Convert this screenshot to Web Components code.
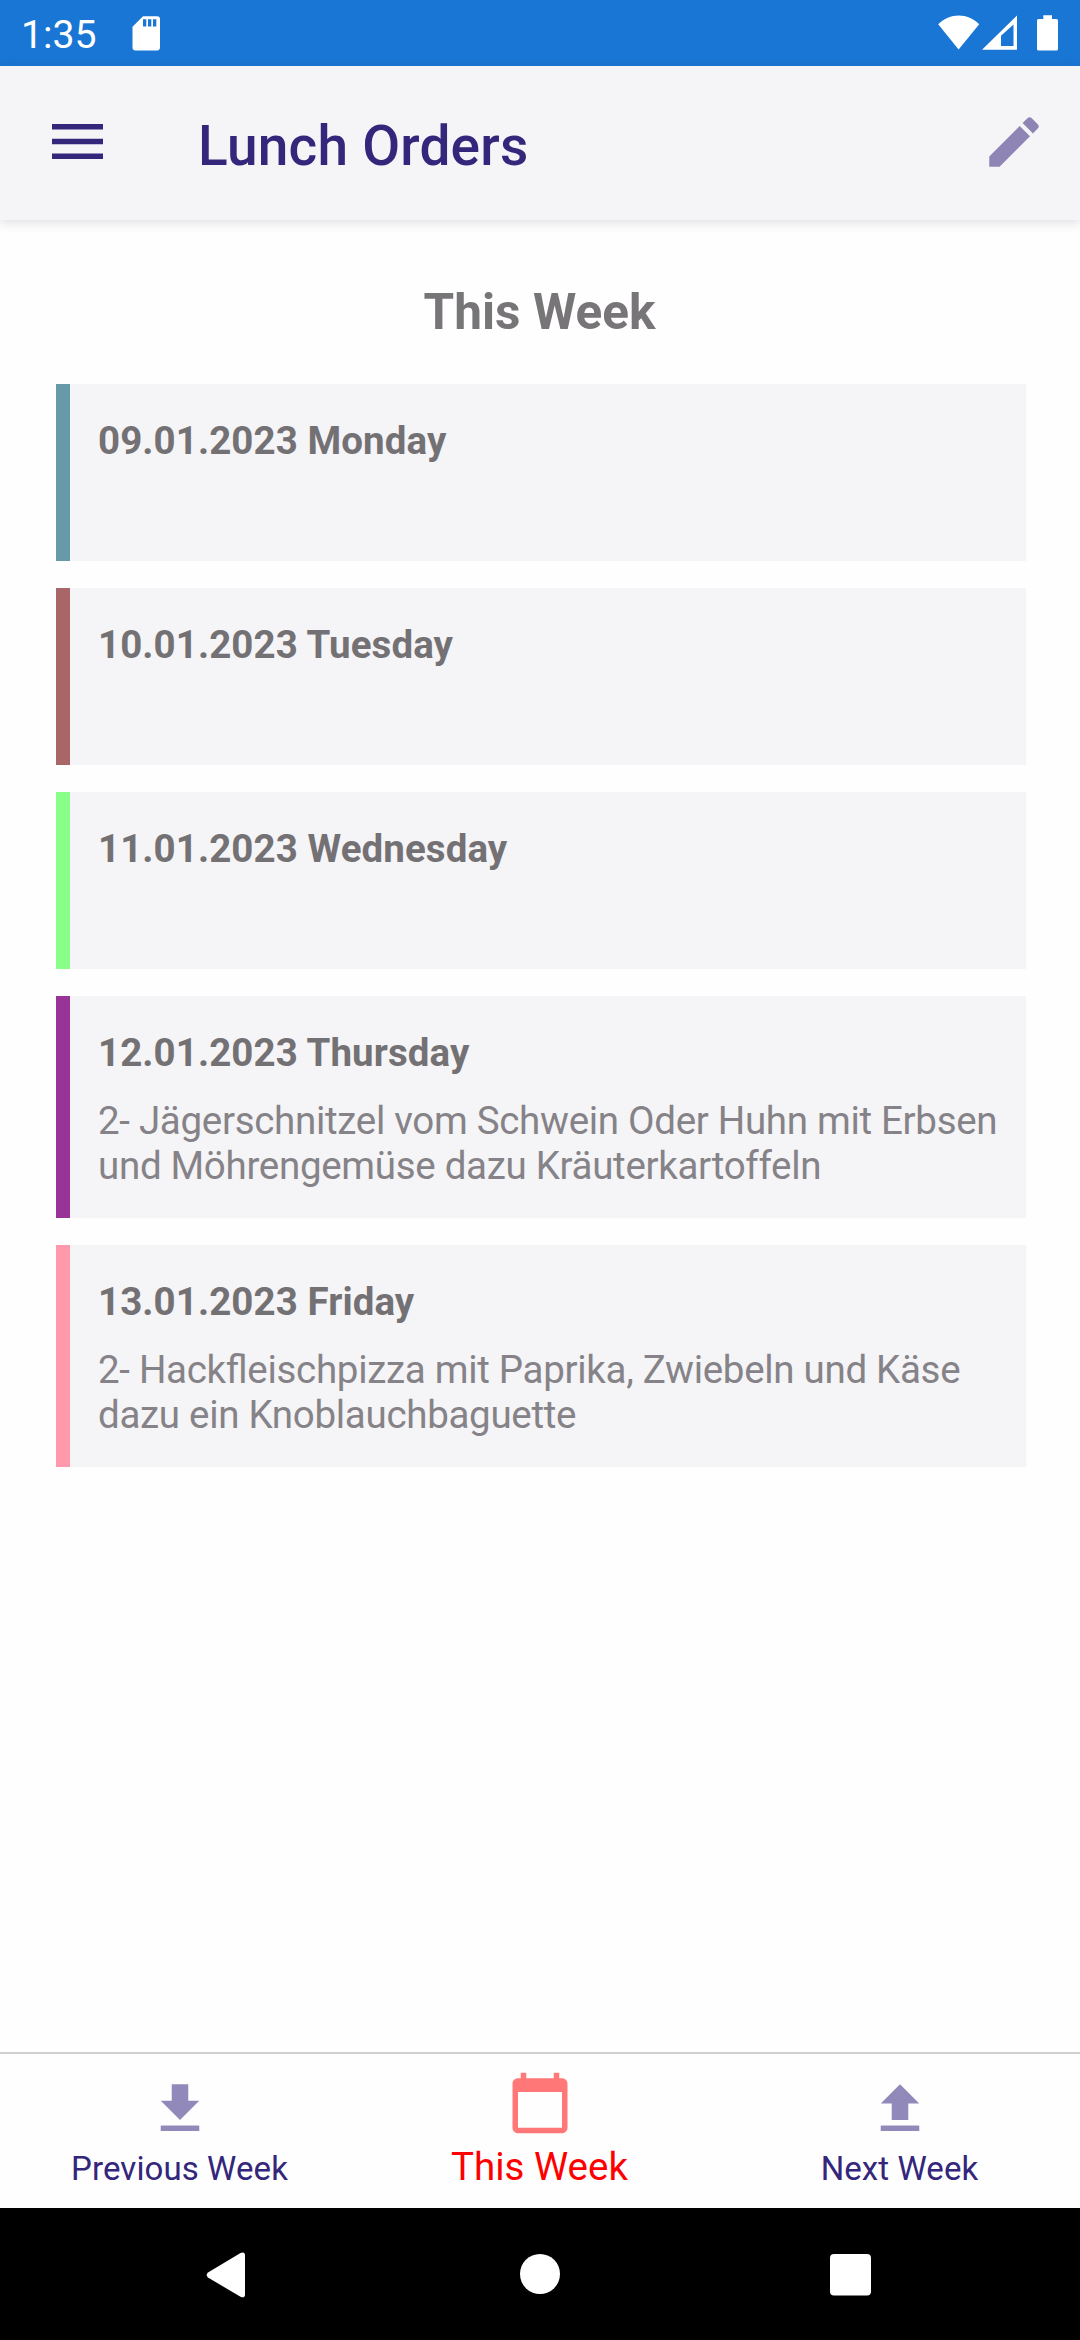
<!DOCTYPE html>
<html lang="en">
<head>
<meta charset="utf-8">
<title>Lunch Orders</title>
<style>
html, body { margin: 0; height: 100%; }
body { font-family: Roboto, "Liberation Sans", sans-serif; background: #fefefe; overflow: hidden; }
</style>
</head>
<body>
<lunch-app></lunch-app>
<script>
function define(name, html) {
  const template = document.createElement('template');
  template.innerHTML = html;
  customElements.define(name, class extends HTMLElement {
    constructor() {
      super();
      this.attachShadow({ mode: 'open' }).append(template.content.cloneNode(true));
    }
  });
}

define('status-bar', `
<style>
:host { display: flex; box-sizing: border-box; height: 66px; background: #1976d5; color: #fff; padding: 0 22px 0 21px; align-items: flex-start; }
.time { font-size: 39.2px; line-height: 45px; padding-top: 13px; width: 111px; }
svg { display: block; fill: currentColor; margin-top: 15px; }
.space { flex: 1; }
</style>
<span class="time">1:35</span>
<svg width="28" height="36" viewBox="0 0 28 36"><path fill-rule="evenodd" d="M11 1.2H25.2A2.8 2.8 0 0 1 28 4V32.6A2.8 2.8 0 0 1 25.2 35.4H3.300A2.800 2.800 0 0 1 .5 32.600V11.700ZM11 4.300V11.600H14.300V4.300ZM16 4.300V11.600H19.300V4.300ZM21 4.300V11.600H24.300V4.300Z"/></svg>
<span class="space"></span>
<svg width="42" height="36" viewBox="0 0 42 36" style="margin-right:2px"><path d="M.2 9.300C11.500-2.300 30-2.300 41.200 9.300L20.600 34.500Z"/></svg>
<svg width="36" height="36" viewBox="0 0 36 36" style="margin-right:19px"><path fill-rule="evenodd" d="M0 34.800L35 .5V34.800ZM19 20.800V30.900H31.500V9.500Z"/></svg>
<svg width="21" height="36" viewBox="0 0 21 36"><path d="M6.300 .3H15V4H19.500A1.500 1.500 0 0 1 21 5.500V34A1.600 1.600 0 0 1 19.400 35.600H1.600A1.600 1.600 0 0 1 0 34V5.500A1.500 1.500 0 0 1 1.500 4H6.300Z"/></svg>
`);

define('app-header', `
<style>
:host { display: flex; box-sizing: border-box; height: 154px; background: #f5f4f6; color: #33267b; align-items: flex-start; padding: 0 33px 0 52px; box-shadow: 0 2px 11px rgba(60,50,70,.18); z-index: 1; }
svg { display: block; fill: currentColor; }
.menu { margin-top: 58px; width: 146px; }
h1 { margin: 48px 0 0; flex: 1; font-size: 55px; line-height: 64px; font-weight: 500; letter-spacing: .2px; }
.edit { margin-top: 43px; color: #8e85b5; }
</style>
<div class="menu"><svg width="51" height="35" viewBox="0 0 51 35"><path d="M0 0H51V5.500H0ZM0 14.700H51V20.200H0ZM0 29.400H51V34.900H0Z"/></svg></div>
<h1><slot></slot></h1>
<svg class="edit" width="66" height="66" viewBox="0 0 24 24"><path d="M3 17.250V21h3.750L17.810 9.940l-3.750-3.750L3 17.250zM20.710 7.040c.39-.39.39-1.020 0-1.410l-2.340-2.340c-.39-.39-1.020-.39-1.410 0l-1.830 1.830 3.750 3.750 1.830-1.830z"/></svg>
`);

define('day-card', `
<style>
:host { display: block; box-sizing: border-box; min-height: 177px; border-left: 14px solid var(--accent); background: #f5f4f7; padding: 34px 28px 30px; }
h3 { margin: 0; font-size: 38.5px; line-height: 45px; font-weight: 700; color: #737174; letter-spacing: .08px; }
::slotted(p) { margin: 23px 0 0; font-size: 38.5px; line-height: 45px; color: #858387; letter-spacing: -.3px; font-feature-settings: "liga" 1; white-space: nowrap; }
</style>
<h3><slot name="day"></slot></h3>
<slot></slot>
`);

define('week-list', `
<style>
:host { display: flex; flex-direction: column; flex: 1; padding: 63px 54px 0 56px; }
h2 { margin: 0 0 43px; padding-right: 3px; text-align: center; font-size: 49.500px; line-height: 58px; font-weight: 700; color: #777578; letter-spacing: .05px; }
div { display: flex; flex-direction: column; gap: 27px; }
</style>
<h2><slot name="title"></slot></h2>
<div><slot></slot></div>
`);

define('tab-item', `
<style>
:host { display: flex; flex: 1; flex-direction: column; align-items: center; justify-content: flex-end; color: #33267b; font-size: 33px; line-height: 39px; padding-bottom: 20px; --icon: #9189ba; gap: 7px; letter-spacing: .09px; }
:host([active]) { color: #f00; font-size: 38.5px; line-height: 45px; padding-bottom: 19px; --icon: #ff7777; gap: 8px; letter-spacing: 0; }
span { margin-right: 1px; }
::slotted(svg) { display: block; width: 66px; height: 66px; fill: var(--icon); }
</style>
<slot name="icon"></slot>
<span><slot></slot></span>
`);

define('tab-bar', `
<style>
:host { display: flex; box-sizing: border-box; height: 156px; border-top: 2px solid #cfcfcf; background: #fefefe; }
</style>
<slot></slot>
`);

define('system-nav', `
<style>
:host { display: flex; box-sizing: border-box; height: 132px; background: #000; padding: 43px 208px 0 205px; justify-content: space-between; align-items: flex-start; }
svg { display: block; fill: #fff; }
</style>
<svg width="42" height="48" viewBox="0 0 42 48"><path d="M3 21.500L35.500 2Q40 .3 40 4.500V43.500Q40 47.500 35.500 45.800L3 26.500Q.3 24 3 21.500Z"/></svg>
<svg width="42" height="48" viewBox="0 0 42 48"><circle cx="22" cy="23" r="20"/></svg>
<svg width="42" height="48" viewBox="0 0 42 48"><rect x="0" y="3" width="41" height="41.500" rx="4"/></svg>
`);

define('lunch-app', `
<style>
:host { display: flex; flex-direction: column; width: 1080px; height: 2340px; }
</style>
<status-bar></status-bar>
<app-header>Lunch Orders</app-header>
<week-list>
  <span slot="title">This Week</span>
  <day-card style="--accent:#679aa9"><span slot="day">09.01.2023 Monday</span></day-card>
  <day-card style="--accent:#a86668"><span slot="day">10.01.2023 Tuesday</span></day-card>
  <day-card style="--accent:#89ff88"><span slot="day">11.01.2023 Wednesday</span></day-card>
  <day-card style="--accent:#983398"><span slot="day">12.01.2023 Thursday</span><p>2- Jägerschnitzel vom Schwein Oder Huhn mit Erbsen<br>und Möhrengemüse dazu Kräuterkartoffeln</p></day-card>
  <day-card style="--accent:#ff99ab"><span slot="day">13.01.2023 Friday</span><p>2- Hackfleischpizza mit Paprika, Zwiebeln und Käse<br>dazu ein Knoblauchbaguette</p></day-card>
</week-list>
<tab-bar>
  <tab-item><svg slot="icon" viewBox="0 0 24 24"><path d="M19 9h-4V3H9v6H5l7 7 7-7zM5 18v2h14v-2H5z"/></svg>Previous Week</tab-item>
  <tab-item active><svg slot="icon" viewBox="0 0 24 24"><path d="M20 3h-1V1h-2v2H7V1H5v2H4c-1.100 0-2 .9-2 2v16c0 1.100.9 2 2 2h16c1.100 0 2-.9 2-2V5c0-1.100-.9-2-2-2zm0 18H4V8h16v13z"/></svg>This Week</tab-item>
  <tab-item><svg slot="icon" viewBox="0 0 24 24"><path d="M9 16h6v-6h4l-7-7-7 7h4zM5 18h14v2H5z"/></svg>Next Week</tab-item>
</tab-bar>
<system-nav></system-nav>
`);
</script>
</body>
</html>
